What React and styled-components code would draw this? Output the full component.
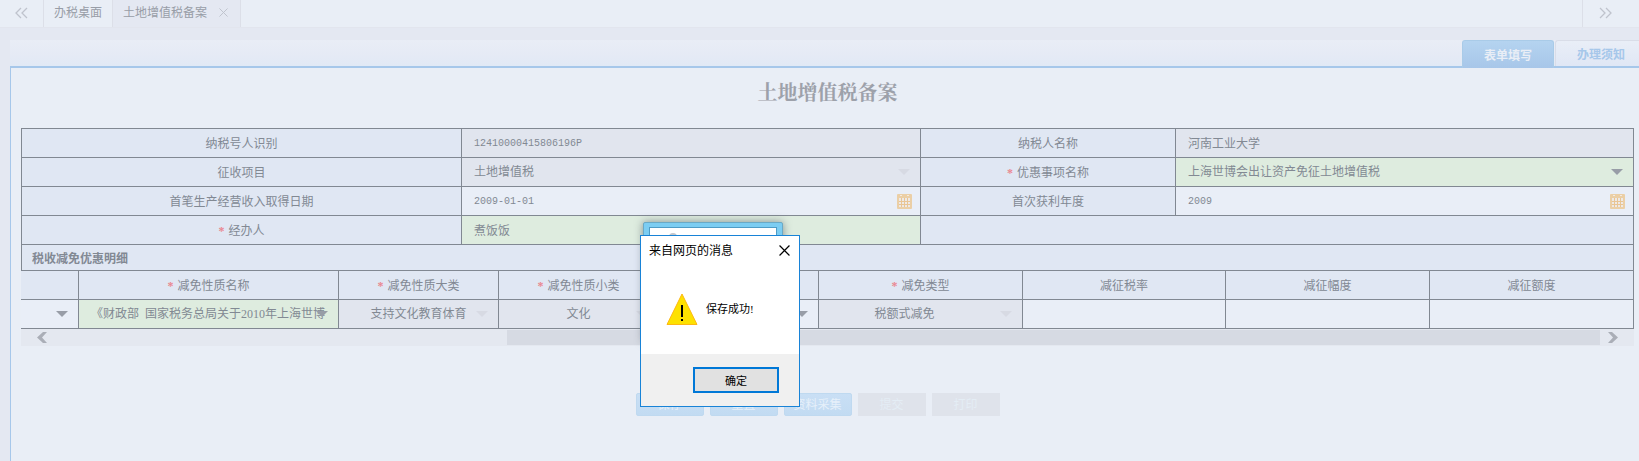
// App.jsx
import React from 'react';
import styled, { createGlobalStyle, css } from 'styled-components';

const GlobalStyle = createGlobalStyle`
  * {
    box-sizing: border-box;
  }

  body {
    margin: 0;
    background: #e4e8f2;
    color: #828993;
    font-family: 'Liberation Serif', 'Noto Sans CJK SC', sans-serif;
    font-size: 12px;
  }

  button,
  input,
  select {
    font-family: inherit;
    font-size: 12px;
  }
`;

const LINE = '#818892';

const Page = styled.div`
  display: flex;
  flex-direction: column;
  min-height: 100vh;
  overflow: hidden;
`;

/* ---------- window tabs ---------- */

const TopBar = styled.nav`
  display: flex;
  height: 28px;
  background: #e9eef6;
  border-bottom: 1px solid #e2e5ee;
`;

const ScrollTabs = styled.button`
  display: flex;
  align-items: center;
  justify-content: center;
  width: ${props => (props.$right ? 57 : 44)}px;
  margin-left: ${props => (props.$right ? 'auto' : 0)};
  padding: ${props => (props.$right ? '0 12px 1px 0' : '0 1px 1px 0')};
  border: 0;
  border-${props => (props.$right ? 'left' : 'right')}: 1px solid #dcdfe8;
  background: none;
`;

const WindowTab = styled.div`
  display: flex;
  align-items: center;
  gap: 12px;
  padding: 0 ${props => (props.$active ? 12 : 10)}px 3px 10px;
  border-right: 1px solid #dcdfe8;
  background: ${props => (props.$active ? '#e4e8f2' : 'transparent')};
`;

const TabLink = styled.a`
  color: #989da7;
  text-decoration: none;
  white-space: nowrap;
`;

const IconButton = styled.button`
  display: flex;
  padding: 0;
  border: 0;
  background: none;
`;

/* ---------- page tabs ---------- */

const TabStrip = styled.div`
  display: flex;
  justify-content: flex-end;
  gap: 1px;
  height: 28px;
  margin: 12px 0 0 10px;
  border-bottom: 2px solid #a6c7ea;
  background: linear-gradient(#e9edf6, #e5eaf5 60%, #e1e9f5);
`;

const PageTab = styled.button`
  height: 26px;
  padding: 0 14px 0 21px;
  border: 1px solid #d9dde8;
  border-width: 1px 0 0 1px;
  border-radius: 3px 0 0 0;
  background: linear-gradient(#e9eef7, #e0e7f5);
  color: #a6c7ea;
  font-weight: bold;
  white-space: nowrap;

  ${props => props.$active && css`
    height: 28px;
    padding: 0 21px;
    border: 1px solid #a9cbe8;
    border-bottom: 0;
    border-radius: 3px 3px 0 0;
    background: linear-gradient(#b5d4f0, #a7c6e9);
    color: #e9eef6;
  `}
`;

const Panel = styled.main`
  flex: 1;
  margin-left: 10px;
  padding: 0 5px 20px 10px;
  border-left: 1px solid #a6c7ea;
  background: #e9eef6;
`;

const Title = styled.h1`
  margin: 0 0 12px;
  color: #9da1aa;
  font-family: 'Noto Serif CJK SC', 'Noto Sans CJK SC', serif;
  font-size: 20px;
  line-height: 48px;
  text-align: center;
`;

/* ---------- form ---------- */

const FormTable = styled.table`
  width: 100%;
  table-layout: fixed;
  border-collapse: separate;
  border-spacing: 0;
  border: 0 solid ${LINE};
  border-width: ${props => (props.$outlined ? '1px 0 0 1px' : 0)};
`;

const Col = styled.col`
  width: ${props => (props.$share / props.$total) * 100}%;
`;

const cell = css`
  height: 29px;
  padding: 0;
  border: 0 solid ${LINE};
  border-width: 0 1px 1px 0;
  font-weight: normal;
`;

const HeadCell = styled.th`
  ${cell}
  background: #e0e7f3;
  text-align: center;
`;

const SectionCell = styled.th`
  ${cell}
  height: 26px;
  padding-left: 10px;
  background: #e0e7f3;
  font-weight: bold;
  text-align: left;
`;

const tones = {
  plain: '#e9eef7',
  readonly: '#e1e5ee',
  required: '#deecdf',
};

const ValueCell = styled.td`
  ${cell}
  background: ${props => tones[props.$tone]};
`;

const Control = styled.div`
  position: relative;
`;

const control = css`
  display: block;
  width: 100%;
  height: 28px;
  padding: 0 12px;
  border: 0;
  outline: 0;
  background: transparent;
  color: #828993;
  opacity: 1;
`;

const TextInput = styled.input`
  ${control}
  ${props => props.$numeric && css`
    font-family: 'Liberation Mono', monospace;
    font-size: 10px;
  `}
`;

const Select = styled.select`
  ${control}
  appearance: none;
  text-align: ${props => props.$align || 'left'};
  text-align-last: ${props => props.$align || 'left'};
  padding-right: ${props => (props.$wide ? 44 : 12)}px;

  &:disabled {
    color: #828993;
    opacity: 1;
  }
`;

const ControlIcon = styled.span`
  position: absolute;
  top: 0;
  right: ${props => (props.$calendar ? 8 : 10)}px;
  display: flex;
  align-items: center;
  height: 28px;
  pointer-events: none;
`;

const Star = styled.span`
  margin-right: 4px;
  color: #ea8790;
  font-weight: bold;
`;

/* ---------- scroll bar ---------- */

const ScrollBar = styled.div`
  display: flex;
  height: 17px;
  background: #e4e8f0;
`;

const ScrollArrow = styled.button`
  display: flex;
  align-items: center;
  justify-content: center;
  width: ${props => (props.$end ? 34 : 44)}px;
  padding: ${props => (props.$end ? '0 8px 0 0' : '0 2px 0 0')};
  border: 0;
  background: none;
`;

const ScrollSpace = styled.div`
  flex: 442;
`;

const ScrollThumb = styled.div`
  flex: 1093;
  margin: 1px 0;
  background: #d6dae3;
`;

const Actions = styled.div`
  display: flex;
  justify-content: center;
  gap: 6px;
  margin-top: 47px;
  padding-right: 20px;
`;

const ActionButton = styled.button`
  width: 68px;
  height: 23px;
  padding: 0 0 2px;
  border: 1px solid #bfd9f0;
  border-radius: 2px;
  background: linear-gradient(#c9dff5, #c2dbf2);
  color: #e6f0fa;

  &:disabled {
    border-color: #dfe3eb;
    border-radius: 0;
    background: #dfe3eb;
    color: #e4edf5;
  }
`;

/* ---------- dialogs ---------- */

const BackDialog = styled.div`
  position: absolute;
  top: 222px;
  left: 643px;
  width: 140px;
  height: 120px;
  padding: 4px 5px;
  border: 1px solid #6aa9c6;
  border-radius: 2px;
  background: #7ccdf2;
  box-shadow: 0 0 8px rgba(70, 80, 90, 0.6);
`;

const BackDialogBody = styled.div`
  height: 100%;
  border: 1px solid #4f9cc6;
  background: #fff;
`;

const BackIcon = styled.svg`
  display: block;
  margin: 4px 0 0 18px;
`;

const Dialog = styled.section`
  position: absolute;
  top: 235px;
  left: 640px;
  width: 160px;
  border: 1px solid #1883d7;
  background: #fff;
  color: #000;
`;

const DialogHeader = styled.header`
  display: flex;
  align-items: center;
  justify-content: space-between;
  height: 28px;
  padding: 0 9px 0 8px;
`;

const DialogTitle = styled.h2`
  margin: 0;
  font-size: 12px;
  font-weight: normal;
`;

const DialogBody = styled.div`
  display: flex;
  align-items: center;
  gap: 8px;
  height: 90px;
  padding: 0 0 0 25px;
`;

const Message = styled.p`
  margin: 0;
  font-size: 11px;
  line-height: 16px;
`;

const DialogFooter = styled.footer`
  display: flex;
  justify-content: flex-end;
  padding: 13px 20px;
  background: #f0f0f0;
`;

const ConfirmButton = styled.button`
  width: 86px;
  height: 26px;
  padding: 0;
  border: 2px solid #0078d7;
  background: #e1e1e1;
  color: #000;
  font-size: 11px;
`;

/* ---------- icons ---------- */

const DoubleChevron = ({ flip }) => (
  <svg width="13" height="12" viewBox="0 0 13 12" fill="none" stroke="#bfc3cd" strokeWidth="1.3">
    <path d={flip ? 'M1 1l5 5-5 5M7 1l5 5-5 5' : 'M6 1L1 6l5 5M12 1L7 6l5 5'} />
  </svg>
);

const Cross = ({ size, color }) => (
  <svg width={size} height={size} viewBox="0 0 10 10" stroke={color} strokeWidth="1.1">
    <path d="M0.5 0.5l9 9M9.5 0.5l-9 9" />
  </svg>
);

const Arrow = ({ faint }) => (
  <svg width="12" height="6" viewBox="0 0 12 6">
    <path d="M0 0h12L6 6z" fill={faint ? '#d7dae3' : '#989da7'} />
  </svg>
);

const Calendar = () => (
  <svg width="15" height="15" viewBox="0 0 15 15">
    <rect width="15" height="15" rx="1" fill="#ebcfa6" />
    <path d="M2 4h11v9H2z" fill="#eee9e6" />
    <path d="M3 1h2v1H3zM10 1h2v1h-2z" fill="#f4ebe0" />
    <path
      d="M4 4h1v9H4zM7 4h1v9H7zM10 4h1v9h-1zM2 7h11v1H2zM2 10h11v1H2z"
      fill="#e9c594"
    />
  </svg>
);

const ScrollChevron = ({ flip }) => (
  <svg width="10" height="11" viewBox="0 0 10 11">
    <path d={flip ? 'M0 0h4l6 5.5L4 11H0l5-5.5z' : 'M10 0H6L0 5.5 6 11h4L5 5.5z'} fill="#aaaeb7" />
  </svg>
);

const Warning = () => (
  <svg width="32" height="32" viewBox="0 0 32 32">
    <path d="M16 1l15 30.5H1z" fill="#fde100" stroke="#fdb813" strokeWidth="1" />
    <path d="M15 12h2v12h-2zM15 26h2v2h-2z" fill="#000" />
  </svg>
);

/* ---------- parts ---------- */

const FieldLabel = ({ id, required, children }) => (
  <HeadCell scope="row">
    {required && <Star>*</Star>}
    <label htmlFor={id}>{children}</label>
  </HeadCell>
);

const SelectField = ({ id, label, value, tone, align, wide }) => (
  <ValueCell $tone={tone}>
    <Control>
      <Select
        id={id}
        aria-label={label}
        disabled={tone === 'readonly'}
        defaultValue={value}
        $align={align}
        $wide={wide}
      >
        <option value={value}>{value}</option>
      </Select>
      <ControlIcon><Arrow faint={tone === 'readonly'} /></ControlIcon>
    </Control>
  </ValueCell>
);

const InputField = ({ id, label, value = '', tone = 'plain', numeric, calendar }) => (
  <ValueCell $tone={tone}>
    <Control>
      <TextInput
        id={id}
        aria-label={label}
        defaultValue={value}
        readOnly={tone === 'readonly'}
        $numeric={numeric}
      />
      {calendar && <ControlIcon $calendar><Calendar /></ControlIcon>}
    </Control>
  </ValueCell>
);

const formColumns = [440, 459, 255, 458];

const detailColumns = [
  { share: 58, title: '' },
  { share: 260, title: '减免性质名称', required: true },
  { share: 160, title: '减免性质大类', required: true },
  { share: 160, title: '减免性质小类', required: true },
  { share: 160, title: '' },
  { share: 204, title: '减免类型', required: true },
  { share: 203, title: '减征税率' },
  { share: 204, title: '减征幅度' },
  { share: 204, title: '减征额度' },
];

const App = () => {
  return (
    <Page>
      <GlobalStyle />
      <TopBar>
        <ScrollTabs aria-label="向左"><DoubleChevron /></ScrollTabs>
        <WindowTab><TabLink href="#desk">办税桌面</TabLink></WindowTab>
        <WindowTab $active>
          <TabLink href="#record">土地增值税备案</TabLink>
          <IconButton aria-label="关闭标签"><Cross size={9} color="#bfc3cd" /></IconButton>
        </WindowTab>
        <ScrollTabs $right aria-label="向右"><DoubleChevron flip /></ScrollTabs>
      </TopBar>

      <TabStrip>
        <PageTab $active>表单填写</PageTab>
        <PageTab>办理须知</PageTab>
      </TabStrip>

      <Panel>
        <Title>土地增值税备案</Title>

        <FormTable $outlined>
          <colgroup>
            {formColumns.map((share, i) => <Col key={i} $share={share} $total={1612} />)}
          </colgroup>
          <tbody>
            <tr>
              <FieldLabel id="taxpayerNo">纳税号人识别</FieldLabel>
              <InputField id="taxpayerNo" value="12410000415806196P" tone="readonly" numeric />
              <FieldLabel id="taxpayerName">纳税人名称</FieldLabel>
              <InputField id="taxpayerName" value="河南工业大学" tone="readonly" />
            </tr>
            <tr>
              <FieldLabel id="levyItem">征收项目</FieldLabel>
              <SelectField id="levyItem" value="土地增值税" tone="readonly" />
              <FieldLabel id="benefit" required>优惠事项名称</FieldLabel>
              <SelectField id="benefit" value="上海世博会出让资产免征土地增值税" tone="required" />
            </tr>
            <tr>
              <FieldLabel id="firstIncome">首笔生产经营收入取得日期</FieldLabel>
              <InputField id="firstIncome" value="2009-01-01" numeric calendar />
              <FieldLabel id="firstProfit">首次获利年度</FieldLabel>
              <InputField id="firstProfit" value="2009" numeric calendar />
            </tr>
            <tr>
              <FieldLabel id="operator" required>经办人</FieldLabel>
              <InputField id="operator" value="煮饭饭" tone="required" />
              <HeadCell as="td" colSpan={2} />
            </tr>
            <tr>
              <SectionCell colSpan={4}>税收减免优惠明细</SectionCell>
            </tr>
          </tbody>
        </FormTable>

        <FormTable>
          <colgroup>
            {detailColumns.map((col, i) => <Col key={i} $share={col.share} $total={1613} />)}
          </colgroup>
          <thead>
            <tr>
              {detailColumns.map((col, i) => (
                <HeadCell key={i} scope="col">
                  {col.required && <Star>*</Star>}
                  {col.title}
                </HeadCell>
              ))}
            </tr>
          </thead>
          <tbody>
            <tr>
              <SelectField label="征收品目" value="" tone="plain" />
              <SelectField label="减免性质名称" value={'《财政部\u2002国家税务总局关于2010年上海世博'} tone="required" />
              <SelectField label="减免性质大类" value="支持文化教育体育" tone="readonly" align="center" />
              <SelectField label="减免性质小类" value="文化" tone="readonly" align="center" />
              <SelectField label="减免项目" value="" tone="plain" />
              <SelectField label="减免类型" value="税额式减免" tone="readonly" align="center" wide />
              <InputField label="减征税率" />
              <InputField label="减征幅度" />
              <InputField label="减征额度" />
            </tr>
          </tbody>
        </FormTable>

        <ScrollBar>
          <ScrollArrow aria-label="向左滚动"><ScrollChevron /></ScrollArrow>
          <ScrollSpace />
          <ScrollThumb />
          <ScrollArrow $end aria-label="向右滚动"><ScrollChevron flip /></ScrollArrow>
        </ScrollBar>

        <Actions>
          <ActionButton>保存</ActionButton>
          <ActionButton>重置</ActionButton>
          <ActionButton>资料采集</ActionButton>
          <ActionButton disabled>提交</ActionButton>
          <ActionButton disabled>打印</ActionButton>
        </Actions>
      </Panel>

      <BackDialog>
        <BackDialogBody>
          <BackIcon width="10" height="10" viewBox="0 0 10 10">
            <circle cx="5" cy="5" r="4" fill="#c4c6ca" />
          </BackIcon>
        </BackDialogBody>
      </BackDialog>

      <Dialog role="alertdialog" aria-labelledby="dialogTitle">
        <DialogHeader>
          <DialogTitle id="dialogTitle">来自网页的消息</DialogTitle>
          <IconButton aria-label="关闭"><Cross size={11} color="#000" /></IconButton>
        </DialogHeader>
        <DialogBody>
          <Warning />
          <Message>保存成功!</Message>
        </DialogBody>
        <DialogFooter>
          <ConfirmButton>确定</ConfirmButton>
        </DialogFooter>
      </Dialog>
    </Page>
  );
};

export default App;
